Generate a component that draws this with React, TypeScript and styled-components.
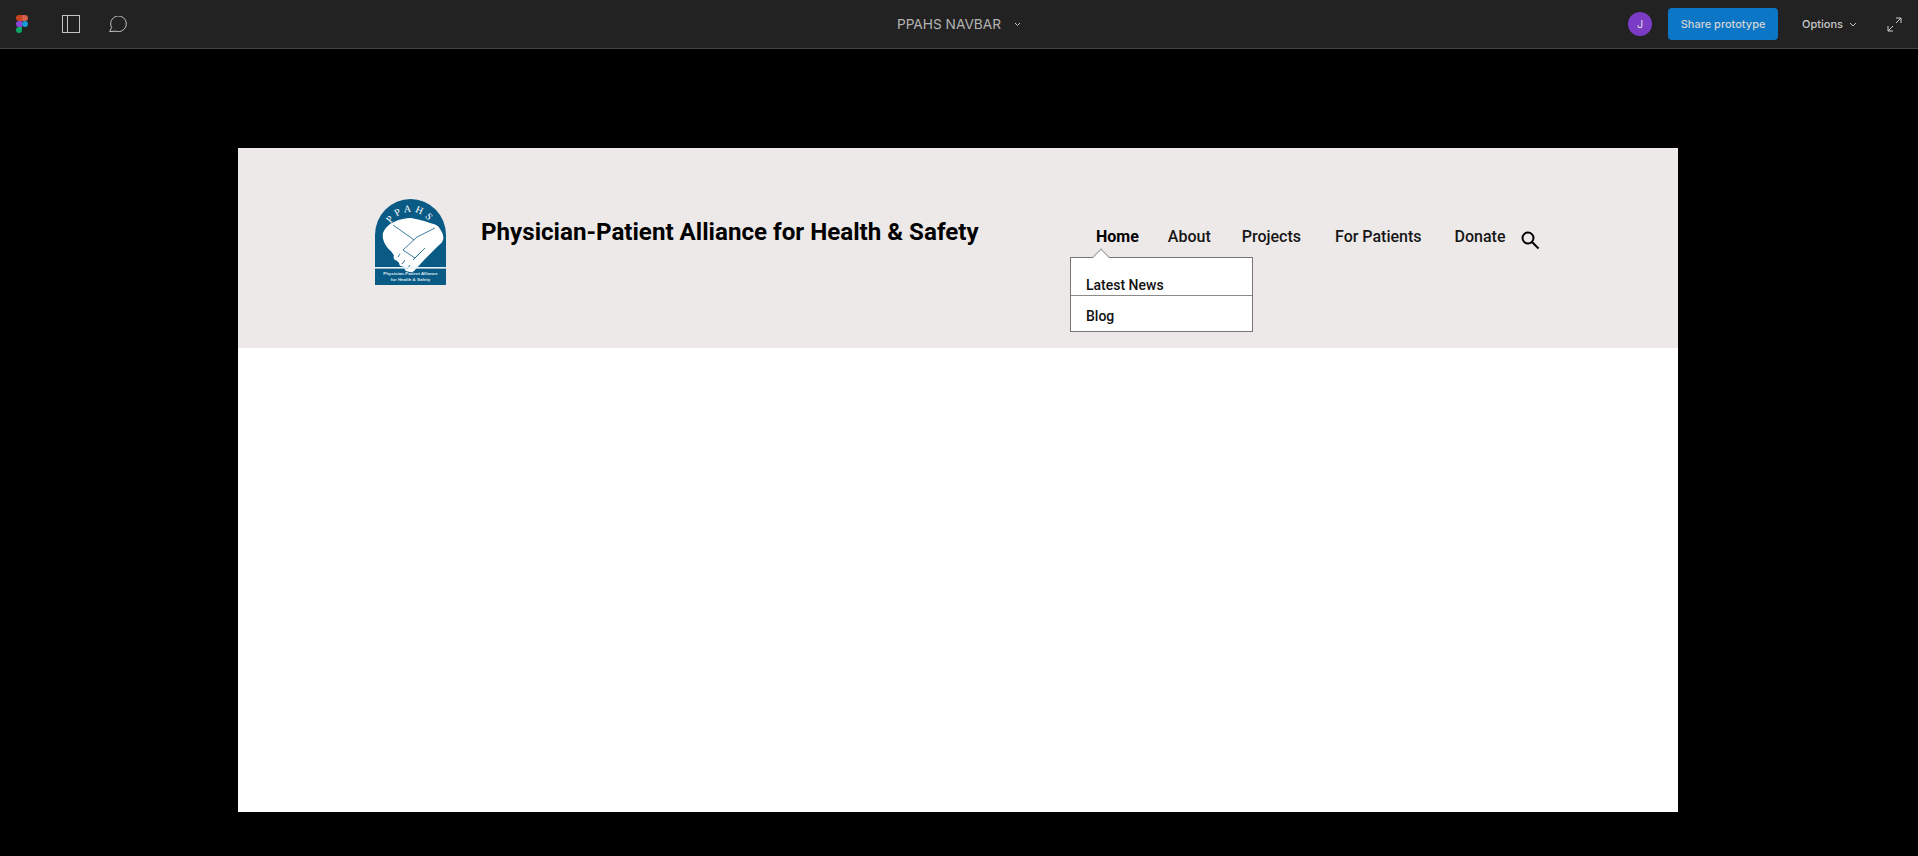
import * as React from "react";
import styled, { createGlobalStyle } from "styled-components";

const GlobalStyle = createGlobalStyle`
  html, body {
    margin: 0;
    height: 100%;
    background: #000;
  }
  body {
    font-family: Inter, "Liberation Sans", sans-serif;
  }
`;

const Page = styled.div`
  width: 1918px;
  height: 856px;
  overflow: hidden;
  background: #000;
  display: flex;
  flex-direction: column;
`;

const TopBar = styled.header`
  height: 48px;
  flex: none;
  box-sizing: content-box;
  border-bottom: 1px solid #444;
  background: #222;
  display: grid;
  grid-template-columns: 1fr auto 1fr;
  align-items: center;
  color: #c4c4c4;
`;

const TopLeft = styled.div`
  display: flex;
  align-items: center;
  padding-left: 16px;
`;

const ToolIcon = styled.svg<{ $gap?: number; $top?: number }>`
  display: block;
  flex: none;
  margin-left: ${(p) => p.$gap ?? 0}px;
  margin-top: ${(p) => p.$top ?? 0}px;
`;

const FileName = styled.div`
  display: flex;
  align-items: center;
  font-size: 13.7px;
  color: #b3b3b3;
`;

const TopRight = styled.div`
  display: flex;
  align-items: center;
  justify-content: flex-end;
  padding-right: 16px;
`;

const Avatar = styled.div`
  width: 24px;
  height: 24px;
  border-radius: 50%;
  background: #7b3bc4;
  color: #ddd;
  font-size: 11px;
  display: flex;
  align-items: center;
  justify-content: center;
`;

const ShareButton = styled.div`
  margin-left: 16px;
  width: 110px;
  height: 32px;
  border-radius: 4px;
  background: #0b76c5;
  color: #d4d4d4;
  font-size: 11px;
  font-weight: 500;
  display: flex;
  align-items: center;
  justify-content: center;
`;

const OptionsLabel = styled.div`
  margin-left: 24px;
  font-size: 11px;
  font-weight: 500;
  color: #c8c8c8;
`;

const Stage = styled.main`
  flex: 1;
  padding: 99px 240px 0 238px;
`;

const Frame = styled.section`
  width: 1440px;
  height: 664px;
  background: #fff;
`;

const SiteHeader = styled.div`
  position: relative;
  height: 200px;
  background: #ede9e8;
  box-sizing: border-box;
  padding: 51px 0 0 137px;
  display: flex;
  align-items: flex-start;
`;

const Logo = styled.svg`
  display: block;
  flex: none;
`;

const SiteTitle = styled.h1`
  margin: 19px 0 0 35px;
  width: 482px;
  flex: none;
  font: 700 24.15px/28px Roboto, sans-serif;
  color: #000;
  white-space: nowrap;
`;

const Nav = styled.nav`
  margin: 28px 0 0 133px;
  display: flex;
  align-items: flex-start;
  color: #000;
`;

const NavItem = styled.span<{ $active?: boolean; $gap?: number }>`
  margin-left: ${(p) => p.$gap ?? 0}px;
  font: ${(p) => (p.$active ? 700 : 500)} 16px/19px Roboto, sans-serif;
  color: ${(p) => (p.$active ? "#000" : "#161616")};
  white-space: nowrap;
`;

const Dropdown = styled.div`
  position: absolute;
  left: 832px;
  top: 109px;
  width: 183px;
  height: 75px;
  box-sizing: border-box;
  background: #fff;
  border: 1px solid #777;
  font: 500 14px/16px Roboto, sans-serif;
  color: #111;

  &::before {
    content: "";
    position: absolute;
    left: 24px;
    top: -7px;
    width: 11px;
    height: 11px;
    background: #fff;
    border-left: 1px solid #999;
    border-top: 1px solid #999;
    transform: rotate(45deg);
  }
`;

const DropdownRow = styled.div<{ $height: number; $divided?: boolean }>`
  position: relative;
  height: ${(p) => p.$height}px;
  box-sizing: border-box;
  padding-left: 15px;
  display: flex;
  align-items: flex-end;
  border-bottom: ${(p) => (p.$divided ? "1px solid #8a8a8a" : "none")};
`;

const DropdownText = styled.span<{ $pad: number }>`
  padding-bottom: ${(p) => p.$pad}px;
`;

function FigmaMark() {
  return (
    <ToolIcon width="12" height="19" viewBox="0 0 12 19">
      <path d="M3 0h3v6H3a3 3 0 0 1 0-6z" fill="#c8431f" />
      <path d="M6 0h3a3 3 0 0 1 0 6H6z" fill="#d2604d" />
      <path d="M3 6h3v6H3a3 3 0 0 1 0-6z" fill="#8c44d8" />
      <circle cx="9" cy="9" r="3" fill="#1a9ad6" />
      <path d="M3 12h3v3a3 3 0 1 1-3-3z" fill="#0aa868" />
    </ToolIcon>
  );
}

function HandsLogo() {
  return (
    <Logo width="71" height="86" viewBox="0 1 71 86">
      <defs>
        <path id="arch" d="M13 36.5 A22.5 22.5 0 0 1 58 36.5" />
      </defs>
      <path d="M0 37 A35.5 36 0 0 1 71 37 V87 H0 Z" fill="#0a5a86" />
      <text fontFamily="Liberation Serif, serif" fontSize="10" fill="#fff" letterSpacing="3.5" textAnchor="middle">
        <textPath href="#arch" startOffset="50%">
          PPAHS
        </textPath>
      </text>
      <path
        d="M8 35 C10 30 14 26 19 24 C25 21 31 20 36 20 C42 21 50 23 55 25 C60 26 64 28 65 31 C68 35 69 39 68 42 C67 45 65 46 63 48 L50 61 L39 73 C37 75 33 74 32 72 L22 63 L20 60 C18 54 14 52 12 49 C9 45 7 40 8 35 Z"
        fill="#fff"
      />
      <circle cx="22" cy="59" r="3.4" fill="#fff" />
      <circle cx="27.5" cy="65" r="3.4" fill="#fff" />
      <circle cx="33" cy="70" r="3.4" fill="#fff" />
      <path
        d="M18 27 L35 39 L39 42 M60 30 L42 39 L28 52 L40 60 L50 50 M38 62 L46 54 M25 56 L23 59 M30 62 L27 66 M35 67 L32 71"
        fill="none"
        stroke="#0a5a86"
        strokeWidth="0.8"
      />
      <rect x="0" y="69" width="71" height="1.6" fill="#eaf1f5" />
      <text x="35.5" y="77" textAnchor="middle" fontFamily="Liberation Sans, sans-serif" fontSize="4.4" fontWeight="700" fill="#dfe9ef">
        Physician-Patient Alliance
      </text>
      <text x="35.5" y="82.5" textAnchor="middle" fontFamily="Liberation Sans, sans-serif" fontSize="4.4" fontWeight="700" fill="#dfe9ef">
        for Health &amp; Safety
      </text>
    </Logo>
  );
}

export default function App() {
  return (
    <Page>
      <GlobalStyle />
      <TopBar>
        <TopLeft>
          <FigmaMark />
          <ToolIcon $gap={34} width="18" height="18" viewBox="0 0 18 18" fill="none" stroke="#c4c4c4" strokeWidth="1">
            <rect x="0.5" y="0.5" width="17" height="17" />
            <path d="M5.5 0.5v17" />
          </ToolIcon>
          <ToolIcon $gap={29} width="18" height="17" viewBox="0 0 18 17" fill="none" stroke="#c4c4c4" strokeWidth="1">
            <path d="M0.7 15.5 L2.6 11.5 A7.8 7.8 0 1 1 7 15.2 Z" />
          </ToolIcon>
        </TopLeft>
        <FileName>
          PPAHS NAVBAR
          <ToolIcon $gap={13} width="7" height="5" viewBox="0 0 7 5" fill="none" stroke="#c4c4c4" strokeWidth="1">
            <path d="M1 1l2.5 2.5L6 1" />
          </ToolIcon>
        </FileName>
        <TopRight>
          <Avatar>J</Avatar>
          <ShareButton>Share prototype</ShareButton>
          <OptionsLabel>Options</OptionsLabel>
          <ToolIcon $gap={6} width="8" height="5" viewBox="0 0 8 5" fill="none" stroke="#c4c4c4" strokeWidth="1">
            <path d="M1 1l3 3 3-3" />
          </ToolIcon>
          <ToolIcon $gap={30} width="15" height="15" viewBox="0 0 15 15" fill="none" stroke="#d0d0d0" strokeWidth="1">
            <path d="M9 1h5v5M14 1L9 6M6 14H1V9M1 14l5-5" />
          </ToolIcon>
        </TopRight>
      </TopBar>
      <Stage>
        <Frame>
          <SiteHeader>
            <HandsLogo />
            <SiteTitle>Physician-Patient Alliance for Health &amp; Safety</SiteTitle>
            <Nav>
              <NavItem $active>Home</NavItem>
              <NavItem $gap={29}>About</NavItem>
              <NavItem $gap={31}>Projects</NavItem>
              <NavItem $gap={34}>For Patients</NavItem>
              <NavItem $gap={33}>Donate</NavItem>
              <ToolIcon $gap={15} $top={4} width="19" height="19" viewBox="0 0 19 19" fill="none" stroke="#000" strokeWidth="2">
                <circle cx="7" cy="7" r="5.5" />
                <path d="M11 11l6.5 6.5" />
              </ToolIcon>
            </Nav>
            <Dropdown>
              <DropdownRow $height={38} $divided>
                <DropdownText $pad={2}>Latest News</DropdownText>
              </DropdownRow>
              <DropdownRow $height={30}>
                <DropdownText $pad={2}>Blog</DropdownText>
              </DropdownRow>
            </Dropdown>
          </SiteHeader>
        </Frame>
      </Stage>
    </Page>
  );
}
